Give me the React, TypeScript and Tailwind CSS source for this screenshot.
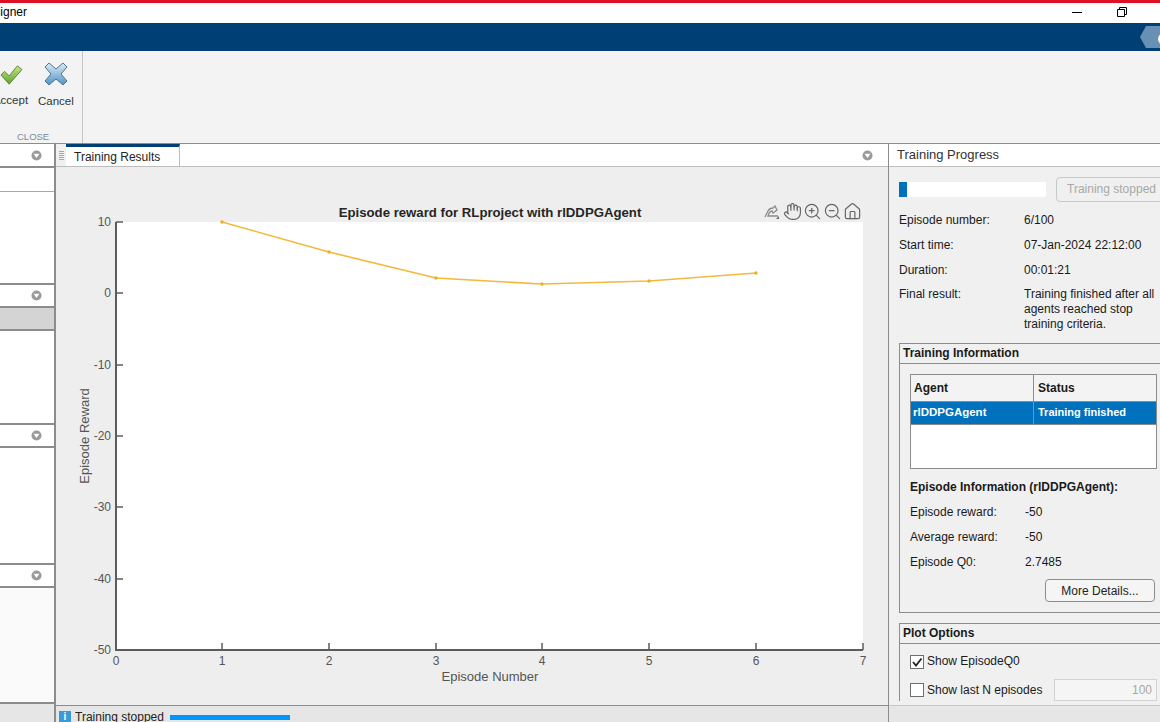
import { Hand, Home, ZoomIn, ZoomOut } from "lucide-react";

const xTicks = [116, 222, 329, 436, 542, 649, 756, 863];
const yTicks = [
  { y: 222, label: "10" },
  { y: 293, label: "0" },
  { y: 365, label: "-10" },
  { y: 436, label: "-20" },
  { y: 507, label: "-30" },
  { y: 579, label: "-40" },
  { y: 650, label: "-50" },
];
const rewardPoints = [
  [222, 222],
  [329, 252],
  [436, 278],
  [542, 284],
  [649, 281],
  [756, 273],
];

function DropArrow() {
  return (
    <svg viewBox="0 0 12 12" className="h-[11px] w-[11px]" aria-hidden="true">
      <circle cx="6" cy="6" r="5.5" fill="#9a9a9a" />
      <path d="M2.8 4.2h6.4L6 8.6Z" fill="#fff" />
    </svg>
  );
}

function DockSection({
  className,
  headerClassName = "h-[23px]",
  children,
}: {
  className: string;
  headerClassName?: string;
  children?: React.ReactNode;
}) {
  return (
    <section className={`flex flex-col border-b-2 border-[#8c8c8c] bg-white ${className}`}>
      <div
        className={`flex shrink-0 items-center justify-end border-b-2 border-[#8c8c8c] pr-[12px] ${headerClassName}`}
      >
        <DropArrow />
      </div>
      {children}
    </section>
  );
}

function InfoRow({ label, value, top }: { label: string; value: string; top: string }) {
  return (
    <div className={`flex h-[15px] items-center ${top}`}>
      <span className="w-[125px] shrink-0">{label}</span>
      <span>{value}</span>
    </div>
  );
}

function RewardRow({ label, value, top }: { label: string; value: string; top: string }) {
  return (
    <div className={`flex h-[15px] items-center ${top}`}>
      <span className="w-[115px] shrink-0">{label}</span>
      <span>{value}</span>
    </div>
  );
}

function ChartPlot() {
  return (
    <svg
      viewBox="56 167 832 538"
      className="absolute inset-0 h-full w-full"
      style={{ fontFamily: "'Liberation Sans', Arial, sans-serif" }}
    >
      <rect x="116" y="222" width="747" height="428" fill="#fff" />
      <line x1="222" y1="650" x2="756" y2="650" stroke="#2f8fd0" strokeWidth="2" />
      <polyline
        points={rewardPoints.map((p) => p.join(",")).join(" ")}
        fill="none"
        stroke="#f4b83a"
        strokeWidth="1.6"
      />
      {rewardPoints.map(([x, y]) => (
        <circle key={x} cx={x} cy={y} r="1.7" fill="#edb120" />
      ))}
      <path d="M116 222V650H863" fill="none" stroke="#5c5c5c" strokeWidth="2" />
      {xTicks.map((x, i) => (
        <g key={x}>
          <line x1={x} y1="650" x2={x} y2="643" stroke="#5c5c5c" strokeWidth="1.5" />
          <text x={x} y="665" fontSize="12" textAnchor="middle" fill="#555">
            {i}
          </text>
        </g>
      ))}
      {yTicks.map((t) => (
        <g key={t.y}>
          <line x1="116" y1={t.y} x2="123" y2={t.y} stroke="#5c5c5c" strokeWidth="1.5" />
          <text x="111" y={t.y + 4} fontSize="12" textAnchor="end" fill="#555">
            {t.label}
          </text>
        </g>
      ))}
      <text x="490" y="217" fontSize="13.2" fontWeight="700" textAnchor="middle" fill="#262626">
        Episode reward for RLproject with rlDDPGAgent
      </text>
      <text x="490" y="681" fontSize="13" textAnchor="middle" fill="#555">
        Episode Number
      </text>
      <text
        x="0"
        y="0"
        fontSize="13"
        textAnchor="middle"
        fill="#555"
        transform="translate(89 436) rotate(-90)"
      >
        Episode Reward
      </text>
    </svg>
  );
}

export default function App() {
  return (
    <div className="flex h-[722px] w-[1160px] flex-col overflow-hidden bg-[#f0f0f0] font-['Liberation_Sans',Arial,sans-serif] text-[12px] text-[#1a1a1a]">
      <div className="h-[3px] shrink-0 bg-[#e01024]" />

      <header className="flex h-[20px] shrink-0 items-center bg-white pb-[2px]">
        <span className="-ml-[21px] text-black">Designer</span>
        <div className="ml-auto flex items-center">
          <span className="mr-[35px] block h-px w-[10px] bg-black" />
          <svg viewBox="0 0 10 10" className="mr-[33px] h-[10px] w-[10px]" aria-hidden="true">
            <path d="M.5 2.5h7v7h-7Z M2.5 2.5V.5h7v7h-2" fill="none" stroke="#000" />
          </svg>
        </div>
      </header>

      <div className="flex h-[28px] shrink-0 items-center justify-end bg-[#003f73]">
        <div className="relative h-[22px] w-[20px] overflow-hidden bg-[#6890b4] [clip-path:polygon(6px_0,100%_0,100%_100%,6px_100%,0_50%)]">
          <span className="absolute top-[7px] left-[18px] h-[12px] w-[12px] rounded-full bg-white" />
        </div>
      </div>

      <div className="flex h-[93px] shrink-0 border-b border-[#8c8c8c] bg-[#f3f3f3]">
        <div className="flex w-[83px] flex-col border-r border-[#c4c4c4]">
          <div className="flex flex-1 pt-[11px]">
            <div className="-ml-[7px] flex w-[35px] flex-col items-center">
              <svg viewBox="0 0 26 24" className="mt-[2px] h-[22px] w-[26px]" aria-hidden="true">
                <defs>
                  <linearGradient id="accept-fill" x1="0" y1="0" x2="0" y2="1">
                    <stop offset="0" stopColor="#c6e68a" />
                    <stop offset="1" stopColor="#5da528" />
                  </linearGradient>
                </defs>
                <path
                  d="M2 12l4-4 5 5L20 2l5 4-14 16Z"
                  fill="url(#accept-fill)"
                  stroke="#5c7d3a"
                />
              </svg>
              <span className="mt-[7px] text-[11.5px] leading-[14px] text-[#333]">Accept</span>
            </div>
            <div className="ml-[10px] flex flex-col items-center">
              <svg viewBox="0 0 24 24" className="h-[24px] w-[24px]" aria-hidden="true">
                <defs>
                  <linearGradient id="cancel-fill" x1="0" y1="0" x2="0" y2="1">
                    <stop offset="0" stopColor="#dcebf6" />
                    <stop offset="1" stopColor="#4f94c6" />
                  </linearGradient>
                </defs>
                <path
                  d="M5 1l7 6 7-6 4 4-6 7 6 7-4 4-7-6-7 6-4-4 6-7-6-7Z"
                  fill="url(#cancel-fill)"
                  stroke="#4d7591"
                />
              </svg>
              <span className="mt-[8px] text-[11.5px] leading-[14px] text-[#333]">Cancel</span>
            </div>
          </div>
          <div className="translate-y-[1px] pl-[17px] text-[9.5px] leading-[14px] text-[#7d8a99]">
            CLOSE
          </div>
        </div>
      </div>

      <div className="flex min-h-0 flex-1">
        <aside className="flex w-[56px] shrink-0 flex-col border-r-2 border-[#8c8c8c]">
          <DockSection className="h-[141px]" headerClassName="h-[24px]">
            <div className="h-[24px] shrink-0 border-b border-[#a8a8a8]" />
          </DockSection>
          <DockSection className="h-[140px]">
            <div className="h-[23px] shrink-0 border-b-2 border-[#8c8c8c] bg-[#d4d4d4]" />
          </DockSection>
          <DockSection className="h-[140px]" />
          <DockSection className="h-[139px]">
            <div className="flex-1 bg-[#fafafa]" />
          </DockSection>
          <div className="flex-1 bg-[#e6e6e6]" />
        </aside>

        <main className="flex min-w-0 flex-1 flex-col">
          <div className="flex h-[23px] shrink-0 items-stretch border-b border-[#bdbdbd] bg-white">
            <div className="flex w-[10px] items-center justify-center bg-[#f0f0f0]">
              <span className="h-[9px] w-[5px] bg-[repeating-linear-gradient(#a8a8a8_0,#a8a8a8_1px,transparent_1px,transparent_2px)]" />
            </div>
            <div className="flex w-[114px] items-center border-t-[3px] border-r border-[#003f73] border-r-[#bdbdbd] pl-[8px] text-[#222]">
              Training Results
            </div>
            <div className="ml-auto flex items-center pr-[15px]">
              <DropArrow />
            </div>
          </div>

          <div className="relative min-h-0 flex-1 bg-[#eeeeee]">
            <ChartPlot />
            <div className="absolute top-[35px] left-[708px] flex items-center gap-[1px] text-[#666]">
              <svg viewBox="0 0 18 16" className="h-[16px] w-[18px]" aria-hidden="true">
                <path
                  d="M1 13l3-6c1-2 3-3 5-3l2-2 2 4-4 3-1-2c-1 0-2 1-3 2l-1 3h10"
                  fill="none"
                  stroke="#8a8a8a"
                  strokeWidth="1.3"
                />
                <path d="M15 12v3h-3Z" fill="#666" />
              </svg>
              <Hand size={19} strokeWidth={1.5} />
              <ZoomIn size={19} strokeWidth={1.5} />
              <ZoomOut size={19} strokeWidth={1.5} />
              <Home size={19} strokeWidth={1.5} />
            </div>
          </div>

          <div className="flex h-[17px] shrink-0 items-start overflow-hidden border-t border-[#8c8c8c] bg-[#e6e6e6] pl-[3px]">
            <span className="mt-[5px] flex h-[12px] w-[12px] items-center justify-center bg-[#3a9ad9] text-[10px] leading-none font-bold text-white">
              i
            </span>
            <span className="mt-[4px] ml-[4px] leading-[14px] whitespace-nowrap text-[#222]">
              Training stopped
            </span>
            <span className="mt-[9px] ml-[6px] h-[5px] w-[120px] bg-[#0096ff]" />
          </div>
        </main>

        <aside className="flex w-[272px] shrink-0 flex-col overflow-hidden border-l border-[#8c8c8c]">
          <div className="flex h-[23px] shrink-0 items-center border-b border-[#bdbdbd] bg-white pl-[8px] text-[13px] text-[#333]">
            Training Progress
          </div>

          <div className="min-h-0 flex-1 overflow-hidden bg-[#f0f0f0] pl-[10px]">
            <div className="mt-[10px] flex items-center">
              <div className="h-[15px] w-[147px] bg-white">
                <div className="h-full w-[8px] bg-[#0072bd]" />
              </div>
              <button className="-mr-[10px] ml-[10px] h-[25px] w-[114px] shrink-0 rounded-[4px] border border-[#c8c8c8] pr-[13px] pb-[2px] text-right text-[#a8a8a8]">
                Training stopped
              </button>
            </div>

            <InfoRow label="Episode number:" value="6/100" top="mt-[10px]" />
            <InfoRow label="Start time:" value="07-Jan-2024 22:12:00" top="mt-[10px]" />
            <InfoRow label="Duration:" value="00:01:21" top="mt-[10px]" />
            <div className="mt-[10px] flex">
              <span className="w-[125px] shrink-0 leading-[15px]">Final result:</span>
              <span className="w-[134px] leading-[15px]">
                Training finished after all agents reached stop training criteria.
              </span>
            </div>

            <section className="mt-[11px] h-[270px] border border-r-0 border-[#8c8c8c]">
              <h2 className="flex h-[20px] items-center border-b border-[#8c8c8c] pb-[2px] pl-[3px] font-bold">
                Training Information
              </h2>
              <div className="mt-[10px] ml-[10px] h-[95px] w-[247px] border border-[#8c8c8c] bg-white font-bold">
                <div className="flex h-[26px] items-center bg-[#f3f3f3]">
                  <span className="flex h-full w-[123px] items-center border-r border-[#8c8c8c] pl-[3px]">
                    Agent
                  </span>
                  <span className="pl-[4px]">Status</span>
                </div>
                <div className="flex h-[24px] items-center border-y border-[#8c8c8c] bg-[#0072bd] text-white">
                  <span className="flex h-full w-[123px] items-center border-r border-[#8c8c8c] pl-[2px] text-[11.5px]">
                    rlDDPGAgent
                  </span>
                  <span className="pb-[2px] pl-[4px] text-[11px]">Training finished</span>
                </div>
              </div>
              <div className="mt-[11px] ml-[10px] h-[15px] leading-[15px] font-bold">
                Episode Information (rlDDPGAgent):
              </div>
              <div className="ml-[10px]">
                <RewardRow label="Episode reward:" value="-50" top="mt-[9px]" />
                <RewardRow label="Average reward:" value="-50" top="mt-[10px]" />
                <RewardRow label="Episode Q0:" value="2.7485" top="mt-[10px]" />
              </div>
              <button className="mt-[10px] ml-[145px] h-[23px] w-[110px] rounded-[4px] border border-[#8c8c8c] bg-[#f5f5f5] text-[#222]">
                More Details...
              </button>
            </section>

            <section className="mt-[10px] border border-r-0 border-b-0 border-[#8c8c8c]">
              <h2 className="flex h-[20px] items-center border-b border-[#8c8c8c] pb-[2px] pl-[3px] font-bold">
                Plot Options
              </h2>
              <label className="mt-[11px] ml-[10px] flex h-[14px] items-center">
                <span className="flex h-[14px] w-[14px] items-center justify-center border border-[#6f6f6f] bg-white">
                  <svg viewBox="0 0 12 12" className="h-[12px] w-[12px]" aria-hidden="true">
                    <path d="M2 6l3 3.5L10.5 2.5" fill="none" stroke="#222" strokeWidth="1.8" />
                  </svg>
                </span>
                <span className="ml-[3px] pb-[2px]">Show EpisodeQ0</span>
              </label>
              <div className="mt-[10px] ml-[10px] flex h-[22px] items-center">
                <span className="h-[14px] w-[14px] border border-[#6f6f6f] bg-white" />
                <span className="ml-[3px] w-[127px]">Show last N episodes</span>
                <span className="flex h-[22px] w-[103px] items-center justify-end border border-[#d2d2d2] bg-[#f5f5f5] pr-[4px] text-[#a8a8a8]">
                  100
                </span>
              </div>
            </section>
          </div>

          <div className="h-[17px] shrink-0 border-t border-[#c8c8c8] bg-[#e6e6e6]" />
        </aside>
      </div>
    </div>
  );
}
